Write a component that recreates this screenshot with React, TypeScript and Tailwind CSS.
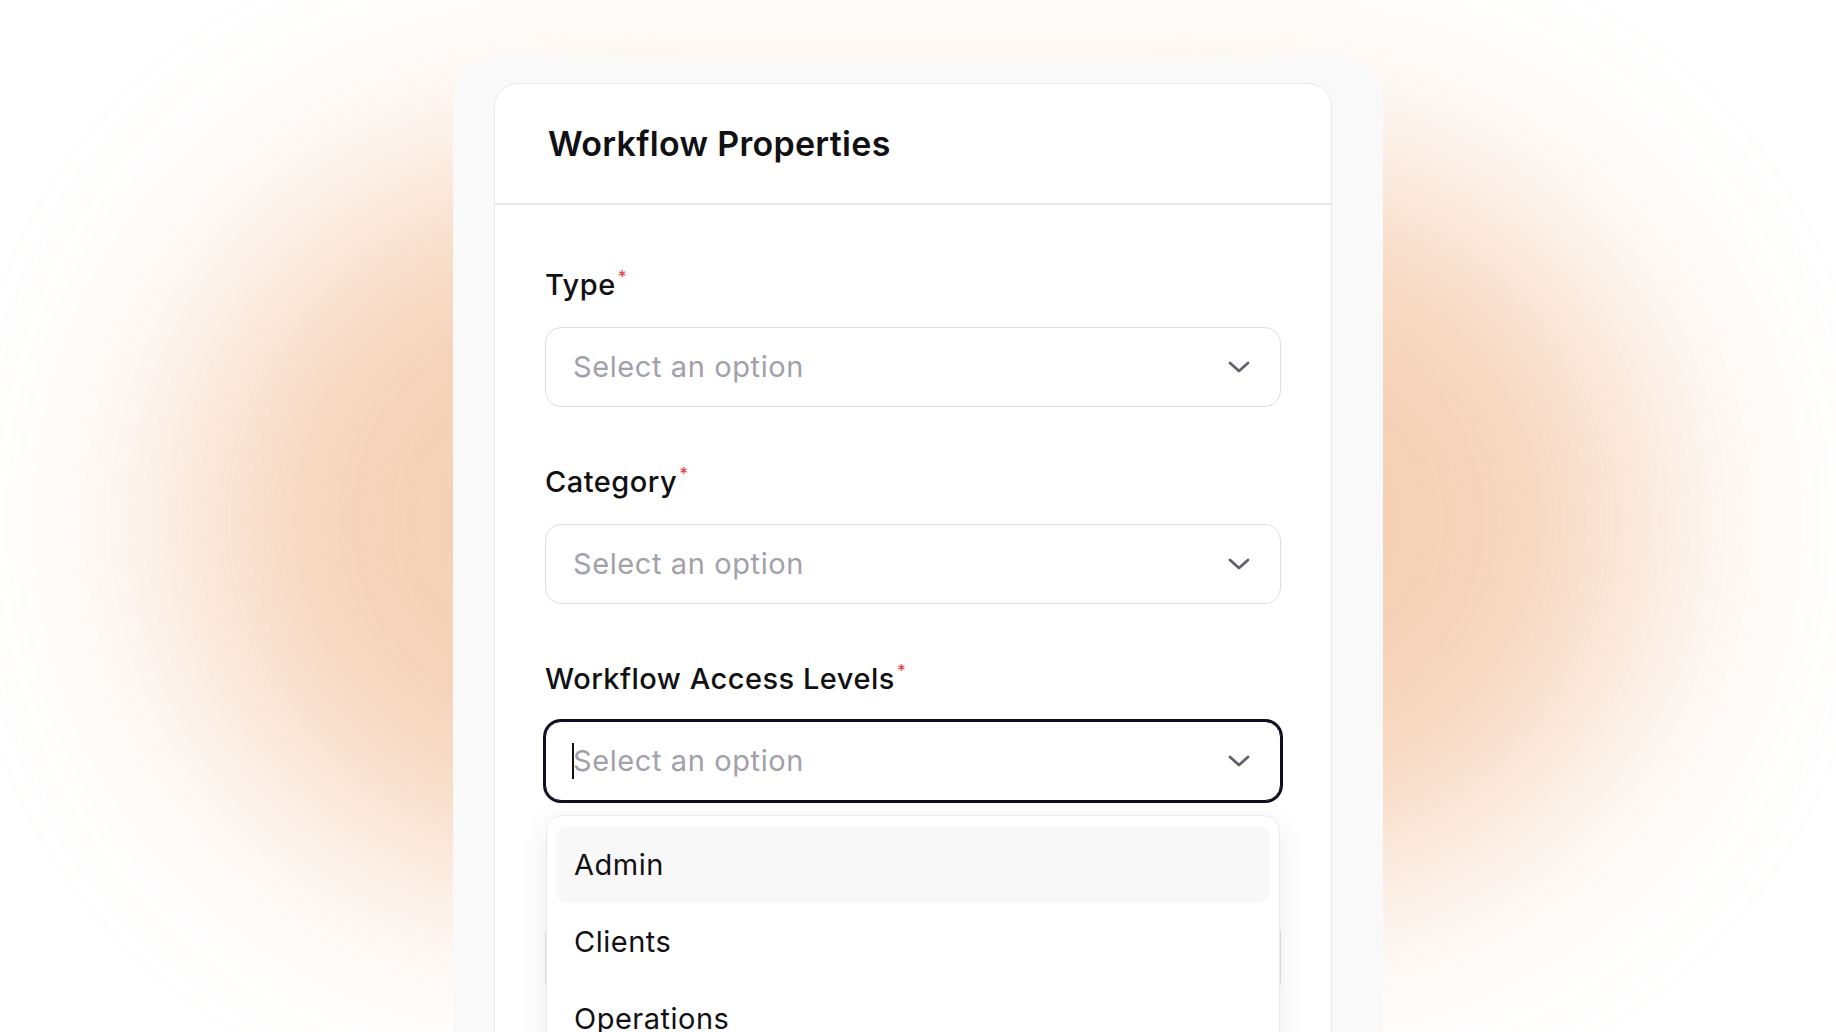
import { useState } from 'react'

const fields = [
  { label: 'Type' },
  { label: 'Category' },
  { label: 'Workflow Access Levels', open: true },
  { label: 'Status' },
]

const options = ['Admin', 'Clients', 'Operations', 'Finance']

function Chevron() {
  return (
    <svg width="22" height="12" viewBox="0 0 22 12" fill="none" className="shrink-0">
      <path d="M2 2l9 8 9-8" stroke="#5f6068" strokeWidth="2.8" strokeLinecap="round" strokeLinejoin="round" />
    </svg>
  )
}

function Field({ label, open }: { label: string; open?: boolean }) {
  const [active, setActive] = useState('Admin')

  return (
    <div className="relative">
      <p className="text-[29px] leading-[34px] font-medium tracking-[0.5px] text-[#111113]">
        {label}
        <span className="relative -top-[12px] ml-[2px] text-[17px] text-[#e5484d]">*</span>
      </p>
      <div
        className={
          open
            ? 'mt-[21px] flex h-[80px] items-center justify-between rounded-[16px] border border-[#0f0d1f] bg-white pl-[27px] pr-[30px] ring-2 ring-[#0f0d1f]'
            : 'mt-[21px] flex h-[80px] items-center justify-between rounded-[16px] border border-[#dedee2] bg-white pl-[27px] pr-[30px]'
        }
      >
        <span className="relative flex items-center text-[29px] tracking-[0.6px] text-[#a1a1aa]">
          {open && <span className="absolute -left-[1px] h-[36px] w-[2px] bg-[#111]" />}
          Select an option
        </span>
        <Chevron />
      </div>

      {/* open menu floats over the next field */}
      {open && (
        <div className="absolute left-[1px] right-[1px] top-[153px] z-10 rounded-[16px] border border-[#ececee] bg-white p-[9px] pt-[10px] shadow-[0_8px_30px_rgba(0,0,0,0.08)]">
          {options.map((o) => (
            <button
              key={o}
              onMouseEnter={() => setActive(o)}
              className={
                o === active
                  ? 'flex h-[77px] w-full items-center rounded-[12px] bg-[#f8f8f8] pl-[18px] text-left text-[29px] tracking-[0.5px] text-[#111113]'
                  : 'flex h-[77px] w-full items-center rounded-[12px] pl-[18px] text-left text-[29px] tracking-[0.5px] text-[#111113]'
              }
            >
              {o}
            </button>
          ))}
        </div>
      )}
    </div>
  )
}

export default function App() {
  return (
    <div className="relative h-[1032px] w-full overflow-hidden bg-white font-['Inter','Noto_Sans',sans-serif]">
      {/* soft orange glow behind the panel */}
      <div className="absolute left-[190px] top-[160px] h-[720px] w-[1456px] rounded-full bg-[#f3c5a3] opacity-80 blur-[110px]" />

      <div className="relative mx-auto mt-[55px] h-[1100px] w-[930px] rounded-[48px] bg-[#f9f9f9] pl-[41px] pt-[28px]">
        <div className="h-[1100px] w-[838px] rounded-[24px] border border-[#e9e9eb] bg-white">
          <div className="flex h-[121px] items-center border-b-2 border-[#e9e9eb] px-[53px]">
            <h1 className="text-[34px] font-semibold tracking-[0.3px] text-[#111113]">Workflow Properties</h1>
          </div>
          <div className="flex flex-col gap-[58px] px-[50px] pt-[63px]">
            {fields.map((f) => (
              <Field key={f.label} label={f.label} open={f.open} />
            ))}
          </div>
        </div>
      </div>
    </div>
  )
}
